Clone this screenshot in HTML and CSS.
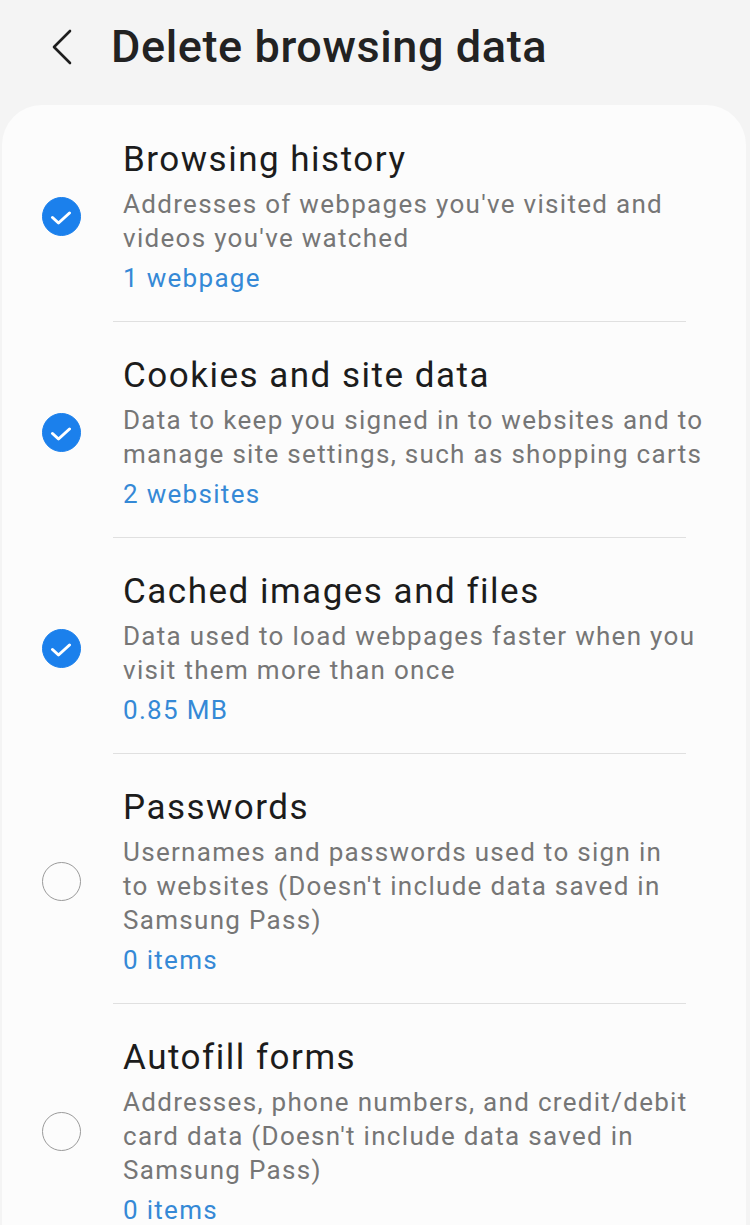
FILE: index.html
```html
<!DOCTYPE html>
<html>
<head>
  <title>Delete browsing data</title>
  <link rel="stylesheet" href="styles.css">
</head>
<body>

  <div class="top-bar">
    <svg class="back" width="24" height="36" viewBox="0 0 24 36">
      <polyline points="20,2 4,18 20,34" fill="none" stroke="#1e1e1e" stroke-width="2.6" stroke-linecap="round" stroke-linejoin="round"/>
    </svg>
    <h1>Delete browsing data</h1>
  </div>

  <div class="card">

    <div class="item">
      <div class="check on">
        <svg width="22" height="14" viewBox="0 0 22 14"><polyline points="2.5,6.5 8.5,12 19.5,2" fill="none" stroke="#fff" stroke-width="3" stroke-linecap="round" stroke-linejoin="round"/></svg>
      </div>
      <div class="item-text">
        <div class="item-title">Browsing history</div>
        <div class="item-desc">Addresses of webpages you've visited and<br>videos you've watched</div>
        <div class="item-count">1 webpage</div>
      </div>
    </div>
    <div class="divider"></div>

    <div class="item">
      <div class="check on">
        <svg width="22" height="14" viewBox="0 0 22 14"><polyline points="2.5,6.5 8.5,12 19.5,2" fill="none" stroke="#fff" stroke-width="3" stroke-linecap="round" stroke-linejoin="round"/></svg>
      </div>
      <div class="item-text">
        <div class="item-title">Cookies and site data</div>
        <div class="item-desc">Data to keep you signed in to websites and to<br>manage site settings, such as shopping carts</div>
        <div class="item-count">2 websites</div>
      </div>
    </div>
    <div class="divider"></div>

    <div class="item">
      <div class="check on">
        <svg width="22" height="14" viewBox="0 0 22 14"><polyline points="2.5,6.5 8.5,12 19.5,2" fill="none" stroke="#fff" stroke-width="3" stroke-linecap="round" stroke-linejoin="round"/></svg>
      </div>
      <div class="item-text">
        <div class="item-title">Cached images and files</div>
        <div class="item-desc">Data used to load webpages faster when you<br>visit them more than once</div>
        <div class="item-count">0.85 MB</div>
      </div>
    </div>
    <div class="divider"></div>

    <div class="item">
      <div class="check"></div>
      <div class="item-text">
        <div class="item-title">Passwords</div>
        <div class="item-desc">Usernames and passwords used to sign in<br>to websites (Doesn't include data saved in<br>Samsung Pass)</div>
        <div class="item-count">0 items</div>
      </div>
    </div>
    <div class="divider"></div>

    <div class="item">
      <div class="check"></div>
      <div class="item-text">
        <div class="item-title">Autofill forms</div>
        <div class="item-desc">Addresses, phone numbers, and credit/debit<br>card data (Doesn't include data saved in<br>Samsung Pass)</div>
        <div class="item-count">0 items</div>
      </div>
    </div>

  </div>

</body>
</html>
```

FILE: styles.css
```css
body {
  margin: 0;
  font-family: Roboto, "Noto Sans", sans-serif;
  background: #f4f4f4;
  height: 1225px;
  overflow: hidden;
}

.top-bar {
  display: flex;
  align-items: center;
  height: 105px;
  padding-left: 50px;
  box-sizing: border-box;
  padding-bottom: 12px;
}

.back {
  display: block;
  margin-right: 37px;
}

.top-bar h1 {
  margin: 0;
  font-size: 45px;
  font-weight: 500;
  color: #222;
  letter-spacing: 0.6px;
}

.card {
  background: #fcfcfc;
  margin: 0 4px 0 2px;
  border-radius: 40px 40px 0 0;
  padding-top: 1px;
}

.item {
  display: flex;
  align-items: center;
  padding: 32px 0 26px 0;
}

.check {
  width: 37px;
  height: 37px;
  border: 1.5px solid #9a9a9a;
  border-radius: 50%;
  margin: 0 42px 0 40px;
  flex-shrink: 0;
  display: flex;
  align-items: center;
  justify-content: center;
}

.check.on {
  background: #1b80ec;
  border-color: #1b80ec;
}

.check svg {
  margin: 2px 2px 0 0;
}

.item-title {
  font-size: 35px;
  line-height: 44px;
  letter-spacing: 1.5px;
  color: #1c1c1c;
}

.item-desc {
  margin-top: 5px;
  font-size: 26px;
  line-height: 34px;
  letter-spacing: 1.3px;
  color: #767676;
}

.item-count {
  margin-top: 6px;
  font-size: 26px;
  line-height: 34px;
  letter-spacing: 1.3px;
  color: #3589d6;
}

.divider {
  height: 1px;
  background: #e0e0e0;
  margin: 0 60px 0 111px;
}
```
